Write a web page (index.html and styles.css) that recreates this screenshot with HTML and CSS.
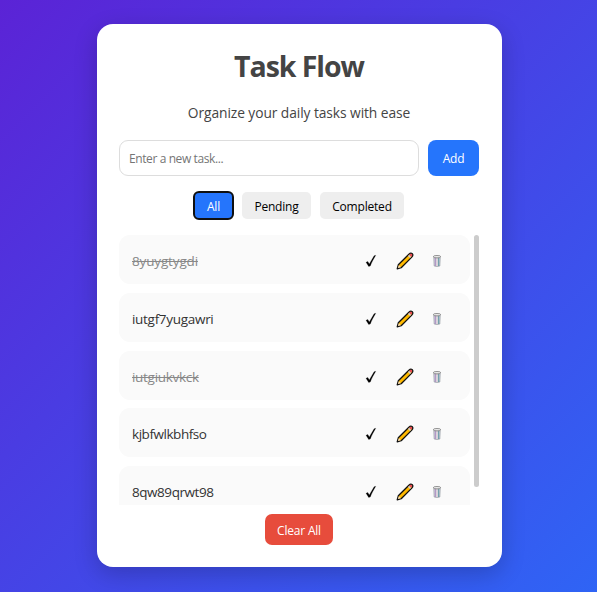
FILE: index.html
```html
<!DOCTYPE html>
<html lang="en">
<head>
<meta charset="utf-8">
<title>Task Flow</title>
<link rel="stylesheet" href="styles.css">
</head>
<body>
<svg width="0" height="0" class="defs" aria-hidden="true">
  <symbol id="check" viewBox="0 0 12 14"><path d="M1 8.300 2.800 7.400 4.300 9.900 9.100 1.700 10.800 1.300C8.500 5 6.900 8 5.300 12L3.700 12.500Z" fill="#000" stroke="#000" stroke-width=".2" stroke-linejoin="round"/></symbol>
  <symbol id="pencil" viewBox="0 0 18 18">
    <path d="M1.200 16.800 2.300 12.800 12.900 2.200Q14.700.5 16.300 1.700 17.600 3.300 15.800 5.100L5.200 15.700Z" fill="#ffb900" stroke="#111" stroke-width="1.300" stroke-linejoin="round"/>
    <path d="M1.900 16.100 2.800 13.200 4.800 15.200Z" fill="#f5dfc5"/>
    <path d="M12 4 14 6 15.200 4.800 13.200 2.800Z" fill="#d0d0d0"/>
    <path d="M13.200 2.800 15.200 4.800Q16.700 3.400 15.900 2.100 14.600 1.400 13.200 2.800Z" fill="#e74856"/>
  </symbol>
  <symbol id="trash" viewBox="0 0 10 14">
    <path d="M1.800 3.500H8.200L7.800 12Q5 13 2.200 12Z" fill="#dcdce6" stroke="#8f969d" stroke-width=".7"/>
    <path d="M3.300 4V12" stroke="#a987c0"/><path d="M5 4V12.300" stroke="#d5c8cf"/><path d="M6.700 4V12" stroke="#5a969f"/>
    <ellipse cx="5" cy="2.700" rx="3.800" ry="1.200" fill="#eee" stroke="#777" stroke-width=".8"/>
  </symbol>
</svg>
<main class="card">
  <h1>Task Flow</h1>
  <p class="subtitle">Organize your daily tasks with ease</p>
  <div class="entry">
    <input class="entry-input" type="text" placeholder="Enter a new task...">
    <button class="add">Add</button>
  </div>
  <div class="filters">
    <button class="filter active">All</button>
    <button class="filter pending">Pending</button>
    <button class="filter completed">Completed</button>
  </div>
  <div class="list-wrap">
    <ul class="list">
      <li class="task"><span class="name done wide">8yuygtygdi</span><svg class="check"><use href="#check"/></svg><svg class="pencil"><use href="#pencil"/></svg><svg class="trash"><use href="#trash"/></svg></li>
      <li class="task"><span class="name">iutgf7yugawri</span><svg class="check"><use href="#check"/></svg><svg class="pencil"><use href="#pencil"/></svg><svg class="trash"><use href="#trash"/></svg></li>
      <li class="task"><span class="name done">iutgiukvkck</span><svg class="check"><use href="#check"/></svg><svg class="pencil"><use href="#pencil"/></svg><svg class="trash"><use href="#trash"/></svg></li>
      <li class="task"><span class="name tight">kjbfwlkbhfso</span><svg class="check"><use href="#check"/></svg><svg class="pencil"><use href="#pencil"/></svg><svg class="trash"><use href="#trash"/></svg></li>
      <li class="task"><span class="name tight">8qw89qrwt98</span><svg class="check"><use href="#check"/></svg><svg class="pencil"><use href="#pencil"/></svg><svg class="trash"><use href="#trash"/></svg></li>
    </ul>
    <div class="thumb"></div>
  </div>
  <button class="clear">Clear All</button>
</main>
</body>
</html>
```
FILE: styles.css
```css
* { box-sizing: border-box; margin: 0; padding: 0; }
body {
  height: 592px;
  padding-top: 24px;
  overflow: hidden;
  display: flex;
  justify-content: center;
  align-items: flex-start;
  font-family: "Open Sans", "Noto Sans", sans-serif;
  background: linear-gradient(135deg, #5b23d6, #2f64f5);
}
.defs { position: absolute; }
.card {
  width: 405px;
  height: 543px;
  margin-left: 2px;
  padding: 22px 23px 22px 22px;
  border-radius: 16px;
  background: #fff;
  box-shadow: 0 7px 23px rgba(0, 0, 0, .2);
  display: flex;
  flex-direction: column;
  align-items: center;
}
h1 { height: 42px; line-height: 41px; font-size: 28.5px; font-weight: 700; color: #444; letter-spacing: -1.05px; white-space: nowrap; }
.subtitle { height: 20px; line-height: 20px; margin-top: 15px; font-size: 13.800px; color: #444; letter-spacing: -.08px; white-space: nowrap; }
.entry { display: flex; width: 100%; height: 36px; gap: 9px; margin-top: 17px; }
button, input { font-family: inherit; font-size: 12px; letter-spacing: -.2px; border: 0; }
button { white-space: nowrap; }
.entry-input { width: 300px; padding: 1px 9px 0; border: 1px solid #ddd; border-radius: 9px; outline: 0; letter-spacing: -.4px; }
.entry-input::placeholder { color: #757575; }
.add { width: 51px; padding-top: 1px; border-radius: 8px; background: #2575fc; color: #fff; }
.filters { display: flex; gap: 9px; margin-top: 16px; height: 27px; }
.filter { height: 27px; padding-top: 1px; border-radius: 5px; background: #eee; color: #000; }
.active { width: 39px; background: #2575fc; color: #fff; outline: 2px solid #101010; outline-offset: -1px; }
.pending { width: 69px; }
.completed { width: 84px; }
.list-wrap { display: flex; width: 100%; height: 270px; gap: 4px; margin-top: 16px; overflow: hidden; }
.list { width: 351px; list-style: none; }
.task { display: flex; align-items: center; height: 49px; margin-bottom: 8.800px; padding: 3px 28px 0 13px; border-radius: 11px; background: #fafafa; }
.name { margin-right: auto; font-size: 13.500px; color: #333; white-space: nowrap; letter-spacing: -.3px; }
.wide { letter-spacing: -.15px; }
.tight { letter-spacing: -.45px; }
.done { color: #888; text-decoration: line-through; }
.check { width: 12px; height: 14px; margin-right: 19px; }
.pencil { width: 18px; height: 18px; margin-right: 18px; }
.trash { width: 10px; height: 14px; }
.thumb { width: 5px; height: 252px; border-radius: 3px; background: #ccc; }
.clear { width: 68px; height: 31px; margin-top: 9px; padding-top: 2px; border-radius: 7px; background: #e74c3c; color: #fff; }
```
